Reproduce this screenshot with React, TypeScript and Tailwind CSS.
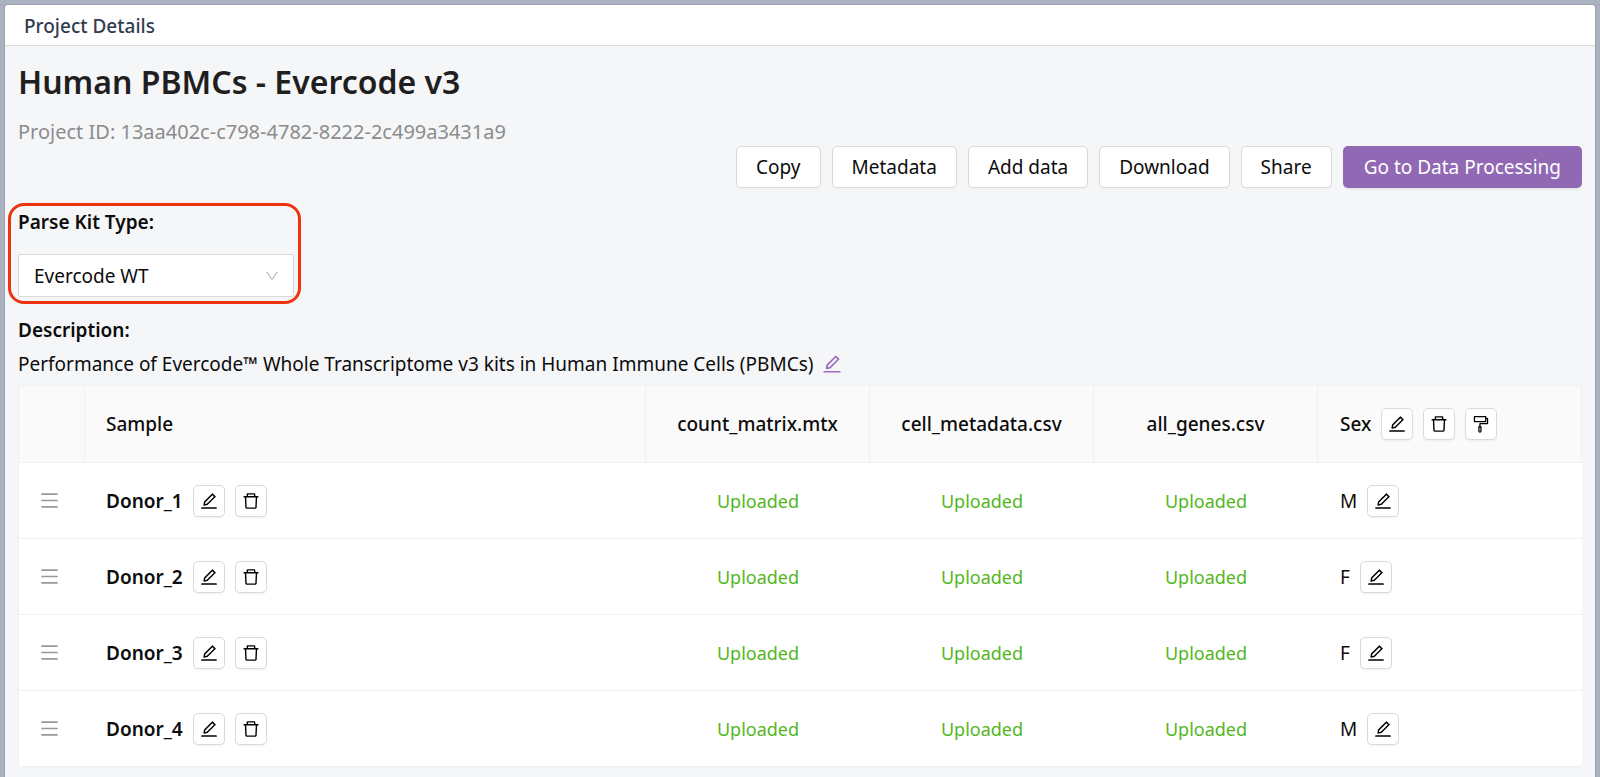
import { useState } from "react";
import type { ReactNode } from "react";
import {
  AiOutlineDelete,
  AiOutlineDown,
  AiOutlineEdit,
  AiOutlineFormatPainter,
  AiOutlineMenu,
} from "react-icons/ai";

const samples = [
  { name: "Donor_1", sex: "M" },
  { name: "Donor_2", sex: "F" },
  { name: "Donor_3", sex: "F" },
  { name: "Donor_4", sex: "M" },
];

const files = ["count_matrix.mtx", "cell_metadata.csv", "all_genes.csv"];

const actions = ["Copy", "Metadata", "Add data", "Download", "Share"];

function IconButton({ label, children }: { label: string; children: ReactNode }) {
  return (
    <button
      type="button"
      aria-label={label}
      className="flex size-8 shrink-0 items-center justify-center rounded-[5px] border border-[#d9d9d9] bg-white text-xl text-black shadow-[0_2px_1px_rgba(0,0,0,0.03)]"
    >
      {children}
    </button>
  );
}

function SamplesTable() {
  return (
    <table className="w-full table-fixed border-separate border-spacing-0 border-t border-l border-[#f0f0f0] bg-white">
      <colgroup>
        <col className="w-[66px]" />
        <col />
        <col className="w-56" />
        <col className="w-56" />
        <col className="w-56" />
        <col className="w-66" />
      </colgroup>
      <thead>
        <tr className="h-[77px] bg-[#fafafa]">
          <th aria-label="Reorder" className="border-r border-b border-[#f0f0f0]" />
          <th className="border-r border-b border-[#f0f0f0] px-[21px] text-left font-medium">
            Sample
          </th>
          {files.map((file) => (
            <th key={file} className="border-r border-b border-[#f0f0f0] text-center font-medium">
              {file}
            </th>
          ))}
          <th className="border-r border-b border-[#f0f0f0] px-[22px] font-medium">
            <div className="flex items-center gap-[10px]">
              Sex
              <IconButton label="Edit Sex">
                <AiOutlineEdit />
              </IconButton>
              <IconButton label="Delete Sex">
                <AiOutlineDelete />
              </IconButton>
              <IconButton label="Fill Sex">
                <AiOutlineFormatPainter />
              </IconButton>
            </div>
          </th>
        </tr>
      </thead>
      <tbody>
        {samples.map((sample) => (
          <tr key={sample.name} className="h-[76px]">
            <td className="border-b border-[#f0f0f0] px-5">
              <AiOutlineMenu className="size-[21px] text-[#999]" />
            </td>
            <td className="border-b border-[#f0f0f0] px-[21px] font-semibold">
              <div className="flex items-center gap-[10px]">
                {sample.name}
                <IconButton label={`Edit ${sample.name}`}>
                  <AiOutlineEdit />
                </IconButton>
                <IconButton label={`Delete ${sample.name}`}>
                  <AiOutlineDelete />
                </IconButton>
              </div>
            </td>
            {files.map((file) => (
              <td
                key={file}
                className="border-b border-[#f0f0f0] text-center text-lg text-[#52b71d]"
              >
                Uploaded
              </td>
            ))}
            <td className="border-b border-[#f0f0f0] px-[22px]">
              <div className="flex items-center gap-[10px]">
                {sample.sex}
                <IconButton label={`Edit sex of ${sample.name}`}>
                  <AiOutlineEdit />
                </IconButton>
              </div>
            </td>
          </tr>
        ))}
      </tbody>
    </table>
  );
}

export default function App() {
  const [kit, setKit] = useState("Evercode WT");

  return (
    <div className="min-h-screen bg-[#abb1bf] px-1 pt-1 font-['Noto_Sans',sans-serif] text-[19px] leading-7 text-[#0c0c0c]">
      <div className="min-h-[calc(100vh-4px)] rounded-t border-x border-t border-[#9ba1b0] bg-[#f5f6f8]">
        <header className="rounded-t border-b border-[#d8d9db] bg-white px-[19px] pt-[7px] pb-[5px]">
          <h2 className="font-medium text-[#323c4e]">Project Details</h2>
        </header>

        <main className="px-[13px] pt-3 pb-2">
          <h1 className="text-[32px] leading-12 font-semibold text-[#1f1f1f]">
            Human PBMCs - Evercode v3
          </h1>
          <p className="mt-3 text-xl leading-7 text-[#8c8c8c]">
            Project ID: 13aa402c-c798-4782-8222-2c499a3431a9
          </p>

          <div className="flex flex-wrap justify-end gap-[11px]">
            {actions.map((action) => (
              <button
                key={action}
                type="button"
                className="h-[42px] rounded-[5px] border border-[#d9d9d9] bg-white px-[19px] shadow-[0_2px_1px_rgba(0,0,0,0.02)]"
              >
                {action}
              </button>
            ))}
            <button
              type="button"
              className="h-[42px] rounded-[5px] bg-[#9168b3] px-[21px] text-white shadow-[0_2px_1px_rgba(0,0,0,0.05)]"
            >
              Go to Data Processing
            </button>
          </div>

          <div className="mt-[15px] -ml-[10px] w-[293px] rounded-2xl border-3 border-[#ee3312] pt-[2px] pr-1 pb-1 pl-[7px]">
            <label htmlFor="kit-type" className="block font-semibold">
              Parse Kit Type:
            </label>
            <div className="mt-[18px] grid items-center">
              <select
                id="kit-type"
                value={kit}
                onChange={(event) => setKit(event.target.value)}
                className="col-start-1 row-start-1 h-[43px] w-full appearance-none rounded-[2px] border border-[#d9d9d9] bg-white px-[15px]"
              >
                <option>Evercode WT</option>
                <option>Evercode WT Mini</option>
                <option>Evercode WT Mega</option>
              </select>
              <AiOutlineDown className="pointer-events-none col-start-1 row-start-1 mr-[14px] size-4 justify-self-end text-[#bfbfbf]" />
            </div>
          </div>

          <h3 className="mt-3 font-semibold">Description:</h3>
          <div className="mt-[6px] mb-[7px] flex items-center gap-2">
            <p>
              Performance of Evercode™ Whole Transcriptome v3 kits in Human Immune Cells (PBMCs)
            </p>
            <button type="button" aria-label="Edit description" className="text-[#9a6cc0]">
              <AiOutlineEdit className="size-[22px]" />
            </button>
          </div>

          <SamplesTable />
        </main>
      </div>
    </div>
  );
}
